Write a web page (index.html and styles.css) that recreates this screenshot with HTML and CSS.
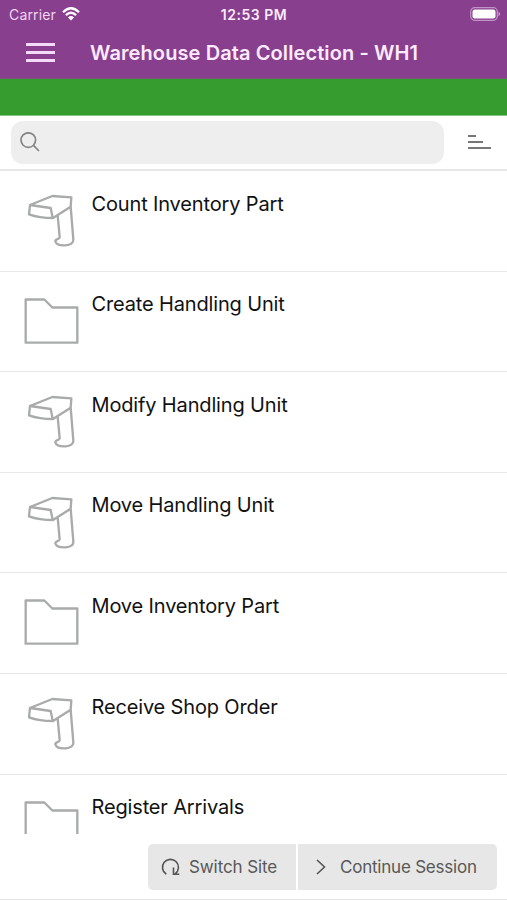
FILE: index.html
```html
<!DOCTYPE html>
<html lang="en">
<head>
<meta charset="utf-8">
<title>Warehouse Data Collection</title>
<link rel="stylesheet" href="styles.css">
</head>
<body>
<svg class="defs" aria-hidden="true">
  <symbol id="scanner" viewBox="0 0 270 240">
    <path d="M60 75 L127 48 L184 52 L182 80 L129 114 Q88 114 57 103 Z M60 75 L122 84 L128 113 M143 106 L149 172 C148 178 135 177 136 184 C139 193 150 197 167 196 C181 195 191 189 190 179 L182 80"/>
  </symbol>
  <symbol id="folder" viewBox="0 0 270 240">
    <path d="M47 55.5 H103 L127 79.5 H202 V185 H47 Z"/>
  </symbol>
</svg>
<div class="screen">
  <header class="top">
    <div class="status">
      <div class="carrier"><span>Carrier</span>
        <svg class="wifi" viewBox="0 0 18 14"><path d="M1 5.2 Q9 -2.6 17 5.2 M3.9 8.2 Q9 3.3 14.1 8.2"/><path class="dot" d="M6 10.5 Q9 7.7 12 10.5 L9 13.6 Z"/></svg>
      </div>
      <div class="time">12:53 PM</div>
      <svg class="battery" viewBox="0 0 31 14"><rect class="shell" x=".7" y=".7" width="26.6" height="12.6" rx="4"/><rect x="2.5" y="2.5" width="23" height="9" rx="2.3"/><path class="tip" d="M28.5 4.5 Q32 7 28.5 9.5Z"/></svg>
    </div>
    <div class="titlebar">
      <div class="menu"><i></i><i></i><i></i></div>
      <h1>Warehouse Data Collection - WH1</h1>
    </div>
  </header>
  <div class="banner"></div>
  <div class="searchbar">
    <div class="search"><svg viewBox="0 0 20 20"><circle cx="8.3" cy="8.1" r="7.3"/><path d="M13.5 13.3 L19 19"/></svg></div>
    <div class="sort"><i></i><i></i><i></i></div>
  </div>
  <main class="list">
    <div class="row"><svg><use href="#scanner"/></svg><span>Count Inventory Part</span></div>
    <div class="row"><svg><use href="#folder"/></svg><span>Create Handling Unit</span></div>
    <div class="row"><svg><use href="#scanner"/></svg><span>Modify Handling Unit</span></div>
    <div class="row"><svg><use href="#scanner"/></svg><span>Move Handling Unit</span></div>
    <div class="row"><svg><use href="#folder"/></svg><span>Move Inventory Part</span></div>
    <div class="row"><svg><use href="#scanner"/></svg><span>Receive Shop Order</span></div>
    <div class="row"><svg><use href="#folder"/></svg><span>Register Arrivals</span></div>
  </main>
  <footer class="actions">
    <div class="btn switch"><svg viewBox="0 0 20 20"><path d="M5.3 17.2 A8 8 0 1 1 14.2 16.8 M12.5 10.5 V17.3 H18.3"/></svg><span>Switch Site</span></div>
    <div class="btn continue"><svg viewBox="0 0 10 16"><path d="M1 1 L8.5 8 L1 15"/></svg><span>Continue Session</span></div>
  </footer>
</div>
</body>
</html>
```
FILE: styles.css
```css
* { box-sizing: border-box; }
body { margin: 0; background: #fff; font-family: Inter, "Liberation Sans", sans-serif; }
svg { display: block; fill: none; flex: none; }
.defs { width: 0; height: 0; position: absolute; }
.screen { width: 507px; height: 900px; overflow: hidden; display: flex; flex-direction: column; border-bottom: 1px solid #e4e4e4; }
.top { height: 79px; background: #883f8d; color: #fcebff; border-bottom: 1px solid #75577a; flex: none; }
.status { height: 27px; display: grid; grid-template-columns: 1fr auto 1fr; align-items: center; padding: 1px 6px 0 9px; font-size: 14px; }
.carrier { display: flex; gap: 6px; align-items: center; letter-spacing: .15px; color: #f0d5f4; }
.wifi { width: 18px; height: 14px; stroke: #fff; stroke-width: 2.3; margin-top: -1px; }
.wifi .dot { fill: #fff; stroke: none; }
.time { font-weight: 600; font-size: 14px; letter-spacing: .5px; margin-left: -2px; }
.battery { width: 31px; height: 14px; justify-self: end; fill: #fff; margin-top: -1px; }
.battery .shell { fill: none; stroke: #c394c8; stroke-width: 1.2; }
.battery .tip { fill: #c394c8; }
.titlebar { height: 51px; display: flex; align-items: center; padding-left: 26px; }
.menu { width: 29px; display: grid; gap: 5px; margin-right: 35px; }
.menu i { height: 3px; background: #f6daf9; }
h1 { margin: 0; font-size: 20px; font-weight: 600; line-height: 26px; letter-spacing: .1px; white-space: nowrap; }
.banner { height: 37px; background: #369c30; border-bottom: 1px solid #85c381; flex: none; }
.searchbar { height: 55px; display: flex; flex: none; padding: 5px 0 0 11px; border-bottom: 2px solid #e8e8e8; }
.search { width: 433px; height: 43px; border-radius: 12px; background: #eee; padding: 11px 9px; }
.search svg { width: 20px; height: 20px; stroke: #858585; stroke-width: 1.7; }
.sort { display: grid; gap: 4px; align-content: start; padding: 14px 0 0 24px; }
.sort i { height: 2px; width: 23px; background: #777; }
.sort i:nth-child(1) { width: 8px; }
.sort i:nth-child(2) { width: 15px; }
.list { height: 663px; overflow: hidden; flex: none; }
.row { height: 100.6px; display: flex; padding: 9px 0 0 10px; border-bottom: 1px solid #e7e7e7; color: #111; }
.row svg { width: 90px; height: 80px; stroke: #a9abab; stroke-width: 7; stroke-linejoin: round; }
.row span { margin: 9.6px 0 0 -8.5px; font-size: 20px; line-height: 28px; white-space: nowrap; letter-spacing: -.15px; }
.actions { display: flex; justify-content: flex-end; gap: 2px; padding: 10px 10px 0 0; color: #585858; font-size: 17px; }
.btn { height: 46px; background: #e7e7e7; display: flex; align-items: center; white-space: nowrap; }
.btn svg { stroke: #555; stroke-width: 1.6; }
.switch { width: 148px; border-radius: 5px 0 0 5px; padding-left: 13px; letter-spacing: -.1px; }
.switch svg { width: 20px; height: 20px; margin-right: 8px; }
.continue { width: 199px; border-radius: 0 5px 5px 0; padding-left: 18px; letter-spacing: -.22px; }
.continue svg { width: 10px; height: 16px; margin-right: 14px; }
```
